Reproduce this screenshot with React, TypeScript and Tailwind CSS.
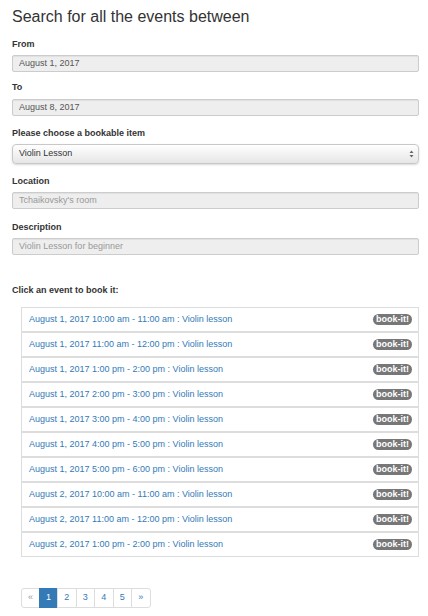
import React from "react";

const events = [
  "August 1, 2017 10:00 am - 11:00 am : Violin lesson",
  "August 1, 2017 11:00 am - 12:00 pm : Violin lesson",
  "August 1, 2017 1:00 pm - 2:00 pm : Violin lesson",
  "August 1, 2017 2:00 pm - 3:00 pm : Violin lesson",
  "August 1, 2017 3:00 pm - 4:00 pm : Violin lesson",
  "August 1, 2017 4:00 pm - 5:00 pm : Violin lesson",
  "August 1, 2017 5:00 pm - 6:00 pm : Violin lesson",
  "August 2, 2017 10:00 am - 11:00 am : Violin lesson",
  "August 2, 2017 11:00 am - 12:00 pm : Violin lesson",
  "August 2, 2017 1:00 pm - 2:00 pm : Violin lesson",
];

function Label({ children, className = "" }: { children: React.ReactNode; className?: string }) {
  return (
    <div className={`text-[9px] leading-[12px] font-bold text-[#333] ${className}`}>{children}</div>
  );
}

function Input({ value, muted = false, className = "" }: { value: string; muted?: boolean; className?: string }) {
  return (
    <div
      className={`h-[17px] flex items-center px-[6px] bg-[#eeeeee] border border-[#cccccc] rounded-[2px] shadow-[inset_0_1px_1px_rgba(0,0,0,0.06)] text-[9px] ${
        muted ? "text-[#999]" : "text-[#555]"
      } ${className}`}
    >
      {value}
    </div>
  );
}

export default function App() {
  return (
    <div
      className="w-[428px] h-[616px] bg-white overflow-hidden pl-[12px] pr-[9px]"
      style={{ fontFamily: '"Liberation Sans", Arial, sans-serif' }}
    >
      <div className="pt-[7px] text-[16px] leading-[20px] text-[#333]">Search for all the events between</div>

      <Label className="mt-[11px]">From</Label>
      <Input value="August 1, 2017" className="mt-[5px]" />

      <Label className="mt-[9px]">To</Label>
      <Input value="August 8, 2017" className="mt-[6px]" />

      <Label className="mt-[11px]">Please choose a bookable item</Label>
      <div className="mt-[5px] h-[20px] flex items-center justify-between pl-[6px] pr-[4px] rounded-[4px] border border-[#c8c8c8] bg-gradient-to-b from-white to-[#e6e6e6] shadow-[0_1px_2px_rgba(0,0,0,0.15)] text-[9px] text-[#333]">
        <span>Violin Lesson</span>
        <svg width="5" height="8" viewBox="0 0 5 8">
          <path d="M2.5 0.5 L4.5 3 L0.5 3 Z" fill="#666" />
          <path d="M2.5 7.5 L4.5 5 L0.5 5 Z" fill="#666" />
        </svg>
      </div>

      <Label className="mt-[11px]">Location</Label>
      <Input value="Tchaikovsky's room" muted className="mt-[5px]" />

      <Label className="mt-[12px]">Description</Label>
      <Input value="Violin Lesson for beginner" muted className="mt-[5px]" />

      <Label className="mt-[29px]">Click an event to book it:</Label>

      <div className="mt-[11px] ml-[9px] flex flex-col">
        {events.map((e, i) => (
          <div
            key={i}
            className="h-[25px] flex items-center justify-between pl-[7px] pr-[6px] border border-[#dddddd] bg-white"
          >
            <span className="text-[9px] text-[#337ab7]">{e}</span>
            <span className="text-[9px] leading-[11px] font-bold text-white bg-[#777] rounded-full px-[3px]">
              book-it!
            </span>
          </div>
        ))}
      </div>

      <div className="mt-[31px] ml-[9px] flex text-[9px]">
        <div className="w-[19px] h-[20px] flex items-center justify-center border border-[#ddd] rounded-l-[3px] text-[#999]">«</div>
        <div className="w-[19px] h-[20px] -ml-px flex items-center justify-center border border-[#337ab7] bg-[#337ab7] text-white">1</div>
        {["2", "3", "4", "5"].map((n) => (
          <div key={n} className="w-[19.5px] h-[20px] -ml-px flex items-center justify-center border border-[#ddd] text-[#337ab7]">
            {n}
          </div>
        ))}
        <div className="w-[19.5px] h-[20px] -ml-px flex items-center justify-center border border-[#ddd] rounded-r-[3px] text-[#337ab7]">»</div>
      </div>
    </div>
  );
}
